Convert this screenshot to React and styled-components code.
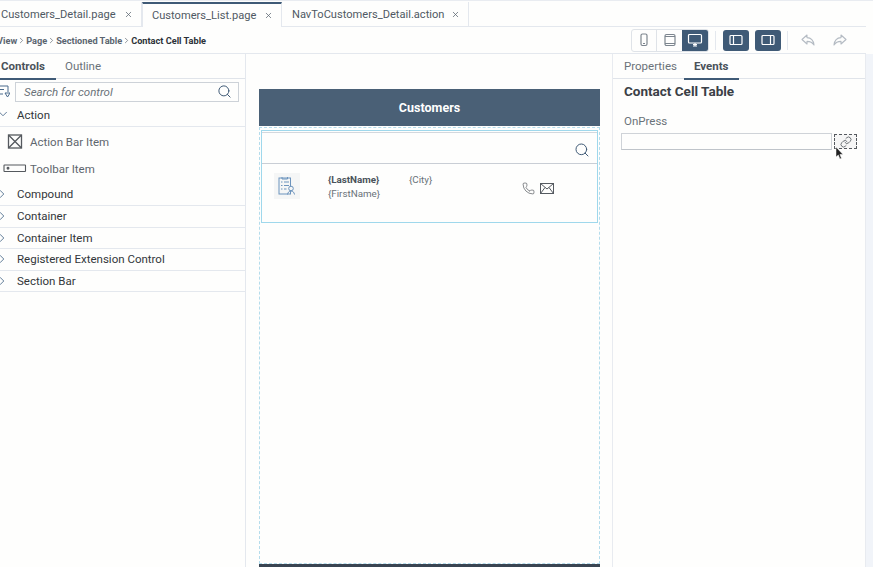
import React from 'react'
import styled, { createGlobalStyle } from 'styled-components'
import { ChevronDown, ChevronRight, Search, X, Phone, Link } from 'lucide-react'

const GlobalStyle = createGlobalStyle`
  html, body { margin: 0; padding: 0; background: #fefefd; }
  body { font-family: Roboto, "Noto Sans", sans-serif; color: #32363a; }
`

const Page = styled.div`
  width: 873px;
  height: 567px;
  overflow: hidden;
  position: relative;
  display: flex;
  flex-direction: column;
  padding-top: 1px;
  box-sizing: border-box;
  border-top: 1px solid #e9ecf1;
  background: #fefefd;
`

const TabBar = styled.div`
  display: flex;
  height: 24px;
  flex: none;
  margin-right: 7px;
  border-bottom: 1px solid #e4e8ee;
`

const FileTab = styled.div`
  display: flex;
  align-items: center;
  justify-content: space-between;
  box-sizing: border-box;
  width: ${p => p.$width}px;
  height: ${p => (p.$active ? 25 : 24)}px;
  padding: 0 8px 0 ${p => p.$pad}px;
  font-size: 11.1px;
  color: #4f5963;
  background: #fefefd;
  border-right: 1px solid #e4e8ee;
  border-left: ${p => (p.$active ? '1px solid #e4e8ee' : 'none')};
  border-top: ${p => (p.$active ? '2px solid #3f5a76' : 'none')};
`

const Toolbar = styled.div`
  display: flex;
  align-items: center;
  height: 26px;
  flex: none;
  margin-right: 7px;
  padding-right: 10px;
  border-bottom: 1px solid #e4e8ee;
`

const Crumbs = styled.div`
  display: flex;
  align-items: center;
  margin-left: -3px;
  font-size: 9.2px;
  font-weight: 700;
  color: #5b6570;
  flex: 1;
`

const CurrentCrumb = styled.span`
  color: #2c3238;
  font-weight: 700;
`

const ToolGroup = styled.div`
  display: flex;
  height: 21px;
  border: 1px solid #dfe3e8;
  border-radius: 3px;
  overflow: hidden;
`

const ToolButton = styled.div`
  width: ${p => p.$width || 25}px;
  height: 100%;
  display: flex;
  align-items: center;
  justify-content: center;
  box-sizing: border-box;
  border-right: ${p => (p.$split ? '1px solid #dfe3e8' : 'none')};
  background: ${p => (p.$on ? '#3f5a76' : 'transparent')};
  color: ${p => (p.$on ? '#fff' : '#7c858e')};
`

const SoloButton = styled(ToolButton)`
  width: 26px;
  height: 21px;
  border-radius: 3px;
  margin-left: ${p => p.$left || 0}px;
`

const ToolDivider = styled.div`
  width: 1px;
  height: 19px;
  background: #e4e8ee;
  margin: 0 ${p => p.$right}px 0 ${p => p.$left}px;
`

const HistoryButton = styled.div`
  width: 32px;
  display: flex;
  justify-content: center;
  color: #b4bbc3;
`

const Workspace = styled.div`
  flex: 1;
  display: flex;
  min-height: 0;
`

const LeftPanel = styled.aside`
  width: 246px;
  flex: none;
  box-sizing: border-box;
  border-right: 1px solid #e4e8ee;
`

const RightPanel = styled.aside`
  width: 254px;
  flex: none;
  box-sizing: border-box;
  border-left: 1px solid #e8ebf0;
  border-right: 1px solid #e8ebf0;
`

const PanelTabs = styled.div`
  display: flex;
  height: 25px;
  box-sizing: border-box;
  border-bottom: 1px solid #e0e4ea;
`

const PanelTab = styled.div`
  box-sizing: border-box;
  height: 26px;
  width: ${p => p.$width}px;
  padding: 5px 0 0 ${p => p.$pad}px;
  font-size: 11.5px;
  font-weight: ${p => (p.$on ? 700 : 400)};
  color: ${p => (p.$on ? '#4a525a' : '#6a7279')};
  border-bottom: 2px solid ${p => (p.$on ? '#3f5a76' : 'transparent')};
`

const SearchRow = styled.div`
  display: flex;
  align-items: center;
  height: 21px;
  margin: 2px 6px 0 0;
  gap: 5px;
`

const SearchBox = styled.div`
  flex: 1;
  height: 20px;
  box-sizing: border-box;
  display: flex;
  align-items: center;
  justify-content: space-between;
  padding: 0 6px 0 8px;
  border: 1px solid #cdd2d8;
  font-size: 11.5px;
  font-style: italic;
  color: #6a7279;
`

const GroupRow = styled.div`
  position: relative;
  box-sizing: border-box;
  height: ${p => p.$height || 21.5}px;
  padding-top: ${p => p.$nudge || 0}px;
  display: flex;
  align-items: center;
  padding-left: 17px;
  font-size: 11.5px;
  color: #32363a;
  border-bottom: 1px solid #e4e8ee;
`

const Caret = styled.span`
  position: absolute;
  left: ${p => p.$left}px;
  top: 50%;
  transform: translateY(-50%);
  display: flex;
  color: #4a6a8c;
`

const ItemList = styled.div`
  padding-top: 1px;
`

const ItemRow = styled.div`
  display: flex;
  align-items: center;
  height: 27px;
  font-size: 11.5px;
  color: #5e666e;
`

const ItemIcon = styled.span`
  width: 30px;
  flex: none;
  display: flex;
  justify-content: center;
  color: #55595e;
`

const Stage = styled.main`
  flex: 1;
  min-width: 0;
  padding: 35px 12px 0 13px;
`

const PhoneFrame = styled.div`
  height: 480px;
  display: flex;
  flex-direction: column;
  overflow: hidden;
`

const PhoneHeader = styled.div`
  height: 37px;
  flex: none;
  display: flex;
  align-items: center;
  justify-content: center;
  background: #4a6076;
  color: #fff;
  font-size: 12.5px;
  font-weight: 700;
`

const DropArea = styled.div`
  height: 437px;
  flex: none;
  box-sizing: border-box;
  margin-top: 1px;
  padding: 2px 1px;
  border: 1px dashed #b4dcec;
`

const PhoneFooter = styled.div`
  height: 3px;
  flex: none;
  background: #3a4552;
`

const TableCell = styled.div`
  height: 93px;
  box-sizing: border-box;
  padding-top: 1px;
  border: 1px solid #9fd8ec;
`

const TableSearch = styled.div`
  height: 32px;
  box-sizing: border-box;
  display: flex;
  align-items: center;
  justify-content: flex-end;
  padding: 3px 7px 0 0;
  color: #3f5a76;
  border-top: 1px solid #d3d8de;
  border-bottom: 1px solid #c9ced5;
`

const ContactRow = styled.div`
  display: flex;
  align-items: flex-start;
  padding: 8px 0 0 12px;
`

const Thumb = styled.div`
  width: 26px;
  height: 26px;
  display: flex;
  align-items: center;
  justify-content: center;
  background: #f5f6f6;
  margin-top: 1px;
`

const NameCol = styled.div`
  width: 81px;
  margin: 1px 0 0 28px;
  font-size: 9.8px;
  line-height: 14px;
  color: #6a7279;
`

const LastName = styled.div`
  font-weight: 700;
  color: #4a525a;
`

const CityCol = styled.div`
  width: 114px;
  margin-top: 1px;
  font-size: 9.8px;
  line-height: 14px;
  color: #6a7279;
`

const ContactIcons = styled.div`
  display: flex;
  align-items: center;
  gap: 5px;
  margin-top: 10px;
  margin-left: -1px;
  color: #555a60;
`

const Inspector = styled.div`
  padding: 4px 8px 0 8px;
`

const InspectorTitle = styled.div`
  font-size: 13.5px;
  font-weight: 700;
  color: #3a4046;
  padding-left: 3px;
`

const FieldLabel = styled.div`
  margin-top: 15px;
  padding-left: 3px;
  font-size: 11.5px;
  color: #6a7279;
`

const FieldRow = styled.div`
  display: flex;
  align-items: center;
  gap: 2px;
  margin-top: 5px;
`

const FieldInput = styled.div`
  width: 211px;
  height: 17px;
  box-sizing: border-box;
  border: 1px solid #cfd3d8;
  border-bottom-color: #bfc4ca;
`

const LinkButton = styled.div`
  width: 23px;
  height: 15px;
  box-sizing: border-box;
  display: flex;
  align-items: center;
  justify-content: center;
  border: 1px dashed #55595e;
  background: #f6f6f6;
  color: #3a4046;
`

const SideStrip = styled.div`
  width: 7px;
  flex: none;
  background: #f1f4f9;
`

const Cursor = styled.svg`
  position: absolute;
  left: 835px;
  top: 146px;
`

const Sep = () => <ChevronRight size={9} strokeWidth={1.8} />

const DeviceIcon = ({ kind }) => {
  if (kind === 'phone') {
    return (
      <svg width="12" height="14" viewBox="0 0 12 14" fill="none" stroke="currentColor" strokeWidth="1.2">
        <rect x="3" y="1" width="6" height="11.5" rx="1.5" />
        <path d="M5 10.5h2" />
      </svg>
    )
  }
  if (kind === 'tablet') {
    return (
      <svg width="14" height="14" viewBox="0 0 14 14" fill="none" stroke="currentColor" strokeWidth="1.2">
        <rect x="2" y="1.5" width="10" height="11" rx="1.5" />
        <path d="M2 3.5h10M2 10.5h10" />
      </svg>
    )
  }
  return (
    <svg width="16" height="14" viewBox="0 0 16 14" fill="none" stroke="currentColor" strokeWidth="1.2">
      <rect x="1.5" y="1.5" width="13" height="8.5" rx="1" />
      <path d="M6 13h4M8 10v3M6 11.5h4" />
    </svg>
  )
}

const PaneIcon = ({ side }) => (
  <svg width="14" height="12" viewBox="0 0 14 12" fill="none" stroke="currentColor" strokeWidth="1.2">
    <rect x="1" y="1.5" width="12" height="9" rx="1" />
    <path d={side === 'left' ? 'M4.5 1.5v9' : 'M9.5 1.5v9'} />
  </svg>
)

const CrossBoxIcon = () => (
  <svg width="16" height="15" viewBox="0 0 16 15" fill="none" stroke="currentColor" strokeWidth="1.3">
    <rect x="1.5" y="1" width="13" height="13" />
    <path d="M1.5 1l13 13M14.5 1l-13 13" />
  </svg>
)

const ToolbarItemIcon = () => (
  <svg width="24" height="9" viewBox="0 0 24 9" fill="none" stroke="currentColor" strokeWidth="1.1">
    <rect x="1" y="1" width="21.5" height="6.5" rx="0.5" />
    <circle cx="5" cy="4.2" r="0.9" fill="currentColor" />
  </svg>
)

const LibraryIcon = () => (
  <svg width="10" height="14" viewBox="0 0 10 14" fill="none" stroke="#4a6a8c" strokeWidth="1">
    <path d="M0 1h8v6M0 4.5h4M0 9h3" />
    <path d="M5 8l2.5 4L10 8z" />
  </svg>
)

const ContactListIcon = () => (
  <svg width="18" height="20" viewBox="0 0 18 20" fill="none" stroke="#6d94bd" strokeWidth="1">
    <rect x="1" y="2" width="11.5" height="16" />
    <path d="M4 1v2h5.5V1M3 6h1.5M6 6h5M3 9.5h1.5M6 9.5h5M3 13h1.5M6 13h2.5" />
    <circle cx="13" cy="12.5" r="2.3" fill="#f5f6f6" />
    <path d="M9.5 18.5c.4-2.4 1.8-3.5 3.5-3.5s3.1 1.1 3.5 3.5" />
  </svg>
)

const EnvelopeIcon = () => (
  <svg width="14" height="11" viewBox="0 0 14 11" fill="none" stroke="currentColor" strokeWidth="1">
    <rect x="0.5" y="0.5" width="13" height="10" />
    <path d="M0.5 0.5L7 6l6.5-5.5M0.5 10.5L5 4.5M13.5 10.5L9 4.5" />
  </svg>
)

const HistoryArrow = ({ flip }) => (
  <svg width="14" height="12" viewBox="0 0 14 12" fill="none" stroke="currentColor" strokeWidth="1.1" strokeLinejoin="round">
    <path
      transform={flip ? 'translate(14 0) scale(-1 1)' : undefined}
      d="M1 5.5L6 1v2.6c4 .2 6.5 3 7 7.4-1.6-2.6-3.8-3.6-7-3.6V10z"
    />
  </svg>
)

function App() {
  return (
    <Page>
      <GlobalStyle />
      <TabBar>
        <FileTab $width={142} $pad={1}>
          Customers_Detail.page
          <X size={9} color="#5b6570" />
        </FileTab>
        <FileTab $width={140} $pad={9} $active>
          Customers_List.page
          <X size={9} color="#5b6570" />
        </FileTab>
        <FileTab $width={187} $pad={10}>
          NavToCustomers_Detail.action
          <X size={9} color="#5b6570" />
        </FileTab>
      </TabBar>
      <Toolbar>
        <Crumbs>
          <span>View</span><Sep />
          <span>Page</span><Sep />
          <span>Sectioned Table</span><Sep />
          <CurrentCrumb>Contact Cell Table</CurrentCrumb>
        </Crumbs>
        <ToolGroup>
          <ToolButton $split><DeviceIcon kind="phone" /></ToolButton>
          <ToolButton><DeviceIcon kind="tablet" /></ToolButton>
          <ToolButton $on $width={26}><DeviceIcon kind="desktop" /></ToolButton>
        </ToolGroup>
        <ToolDivider $left={6} $right={7} />
        <SoloButton $on><PaneIcon side="left" /></SoloButton>
        <SoloButton $on $left={6}><PaneIcon side="right" /></SoloButton>
        <ToolDivider $left={6} $right={4} />
        <HistoryButton><HistoryArrow /></HistoryButton>
        <HistoryButton><HistoryArrow flip /></HistoryButton>
      </Toolbar>
      <Workspace>
        <LeftPanel>
          <PanelTabs>
            <PanelTab $on $width={56} $pad={1}>Controls</PanelTab>
            <PanelTab $width={60} $pad={9}>Outline</PanelTab>
          </PanelTabs>
          <SearchRow>
            <LibraryIcon />
            <SearchBox>
              Search for control
              <Search size={15} color="#3f5a76" strokeWidth={1.6} />
            </SearchBox>
          </SearchRow>
          <GroupRow $height={25} $nudge={1}>
            <Caret $left={-4}><ChevronDown size={14} strokeWidth={1.5} /></Caret>
            Action
          </GroupRow>
          <ItemList>
            <ItemRow>
              <ItemIcon><CrossBoxIcon /></ItemIcon>
              Action Bar Item
            </ItemRow>
            <ItemRow>
              <ItemIcon><ToolbarItemIcon /></ItemIcon>
              Toolbar Item
            </ItemRow>
          </ItemList>
          <GroupRow $height={24}>
            <Caret $left={-5}><ChevronRight size={14} strokeWidth={1.5} /></Caret>
            Compound
          </GroupRow>
          {['Container', 'Container Item', 'Registered Extension Control', 'Section Bar'].map(name => (
            <GroupRow key={name}>
              <Caret $left={-5}><ChevronRight size={14} strokeWidth={1.5} /></Caret>
              {name}
            </GroupRow>
          ))}
        </LeftPanel>
        <Stage>
          <PhoneFrame>
            <PhoneHeader>Customers</PhoneHeader>
            <DropArea>
              <TableCell>
                <TableSearch><Search size={16} strokeWidth={1.5} /></TableSearch>
                <ContactRow>
                  <Thumb><ContactListIcon /></Thumb>
                  <NameCol>
                    <LastName>{'{LastName}'}</LastName>
                    <div>{'{FirstName}'}</div>
                  </NameCol>
                  <CityCol>{'{City}'}</CityCol>
                  <ContactIcons>
                    <Phone size={13} strokeWidth={1.3} />
                    <EnvelopeIcon />
                  </ContactIcons>
                </ContactRow>
              </TableCell>
            </DropArea>
            <PhoneFooter />
          </PhoneFrame>
        </Stage>
        <RightPanel>
          <PanelTabs>
            <PanelTab $width={71} $pad={11}>Properties</PanelTab>
            <PanelTab $on $width={55} $pad={10}>Events</PanelTab>
          </PanelTabs>
          <Inspector>
            <InspectorTitle>Contact Cell Table</InspectorTitle>
            <FieldLabel>OnPress</FieldLabel>
            <FieldRow>
              <FieldInput />
              <LinkButton><Link size={12} strokeWidth={1.4} /></LinkButton>
            </FieldRow>
          </Inspector>
        </RightPanel>
        <SideStrip />
      </Workspace>
      <Cursor width="9" height="13" viewBox="0 0 9 13">
        <path d="M1 0v10l2.3-2 1.6 4 1.6-.7-1.6-3.8H8z" fill="#222" stroke="#fff" strokeWidth="0.5" />
      </Cursor>
    </Page>
  )
}

export default App
